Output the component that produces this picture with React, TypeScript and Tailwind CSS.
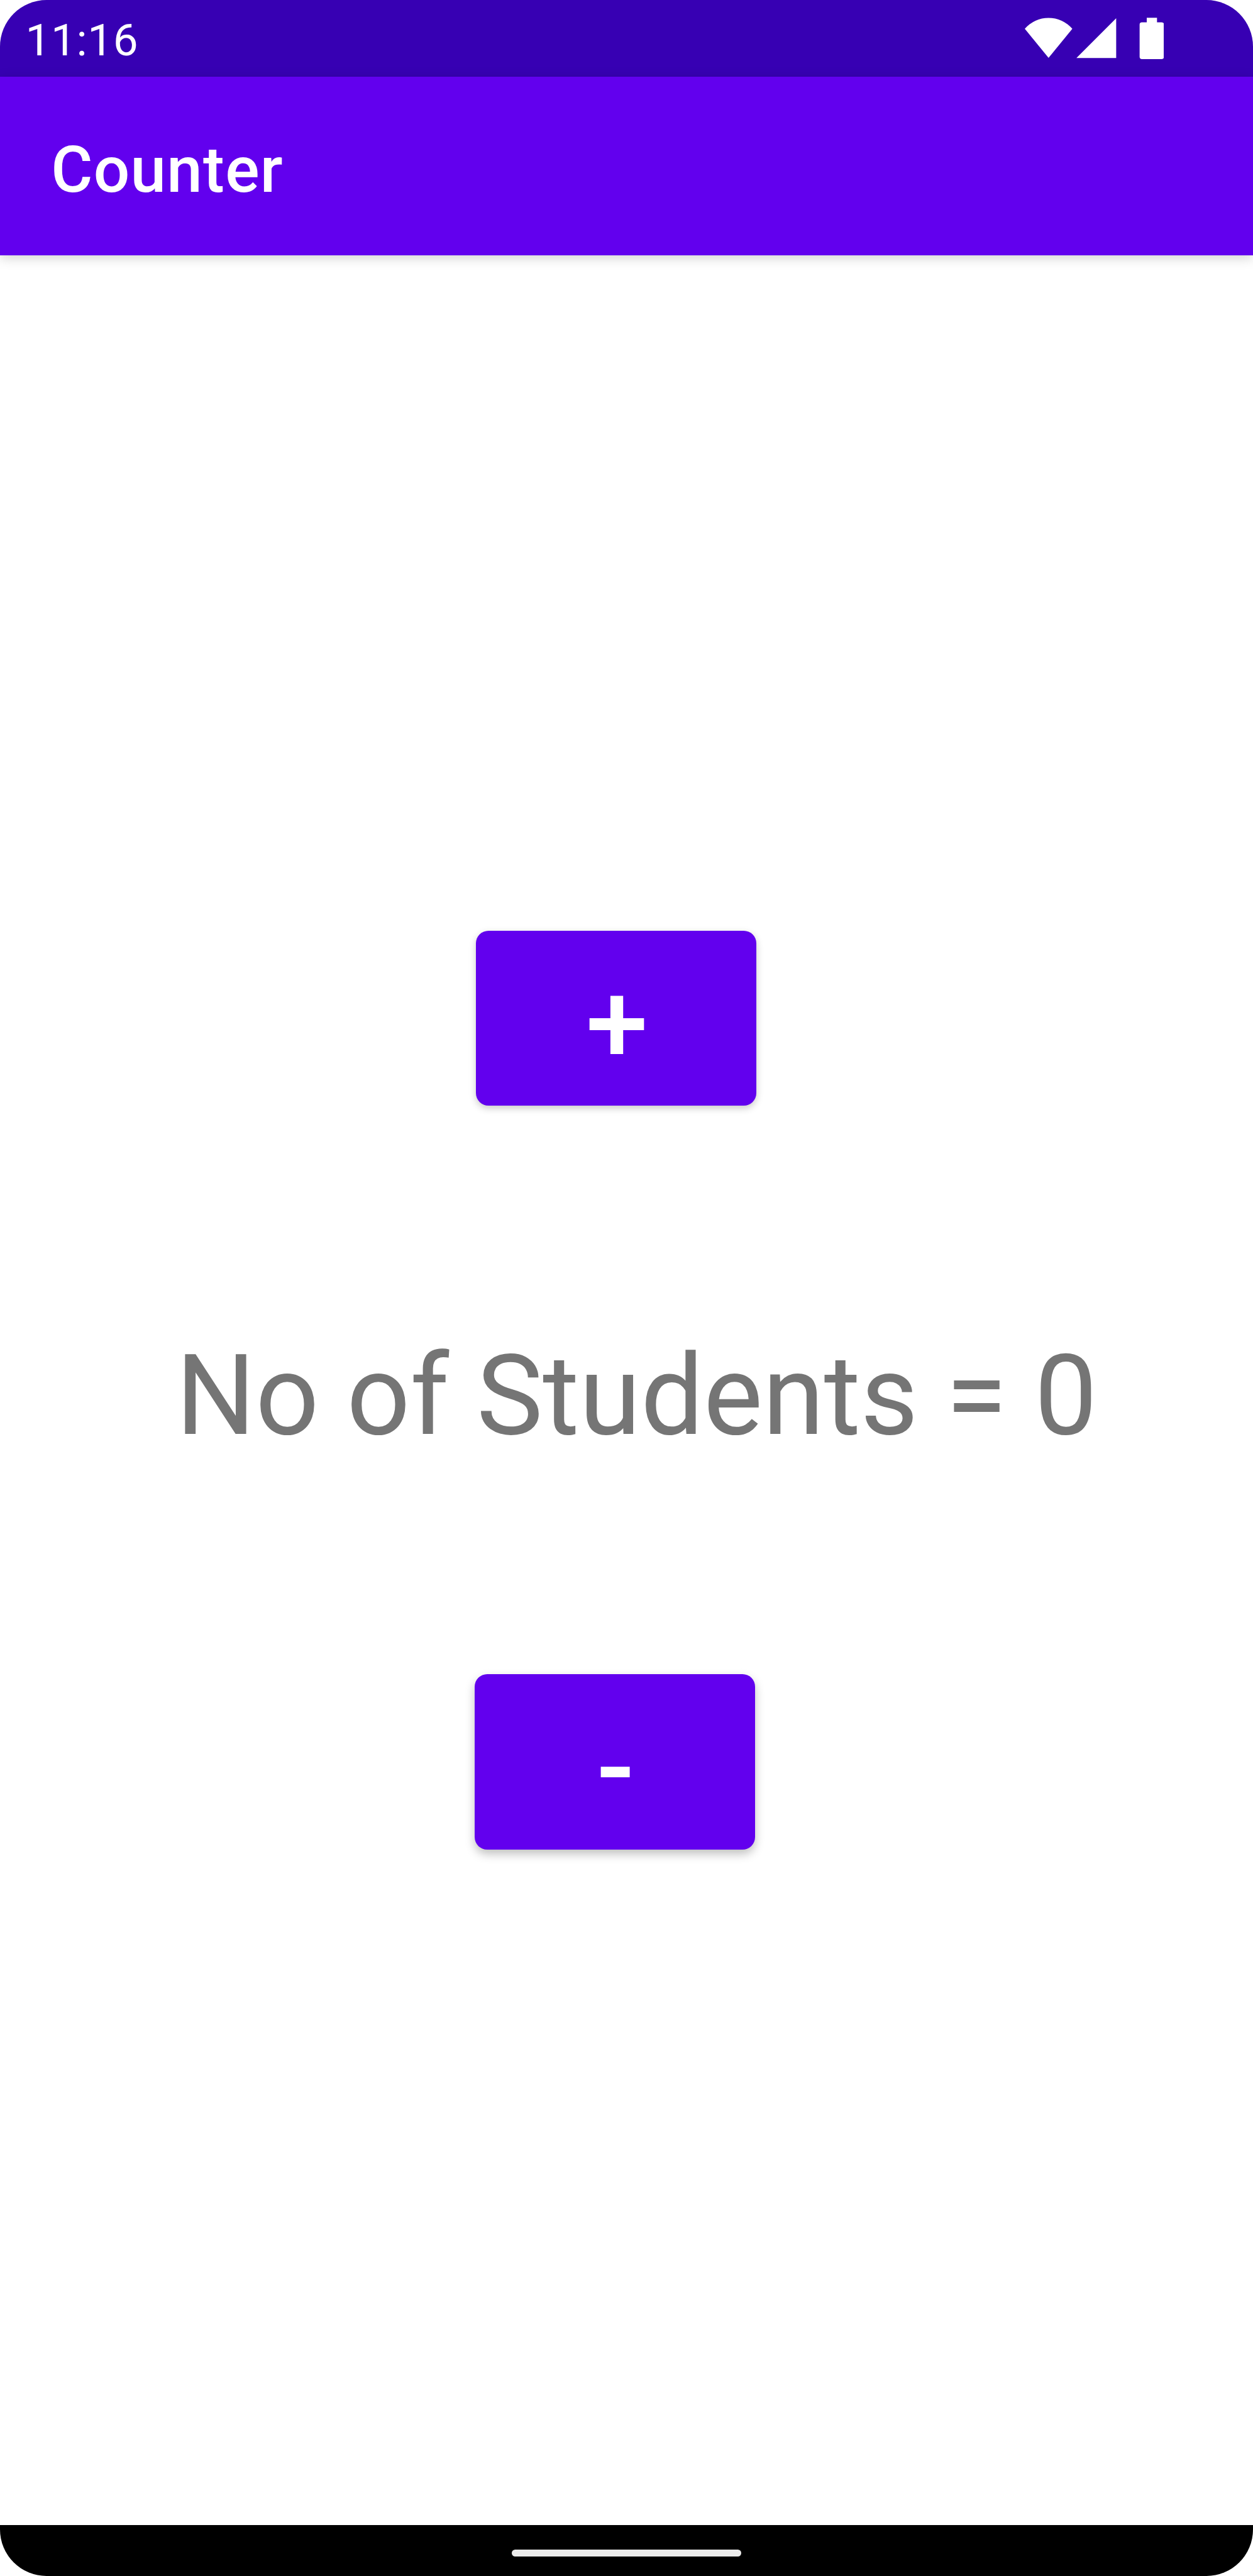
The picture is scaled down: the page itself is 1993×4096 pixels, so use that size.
import { useState } from "react";

function StatusIcons() {
  return (
    <svg className="mt-[27.7px] h-[66.4px] w-[221.4px]" viewBox="1766 30 240 72" preserveAspectRatio="none" fill="white">
      <path d="M1807 99.5 1766 49.3A54.1 54.1 0 0 1 1848 49.3Z" />
      <path d="M1923.6 31V99.6H1855Z" />
      <path d="M1976.3 30.4h17.7V38h8a4 4 0 0 1 4 4v55.5a4 4 0 0 1-4 4h-34a4 4 0 0 1-4-4V42a4 4 0 0 1 4-4h8.3z" />
    </svg>
  );
}

export default function App() {
  const [count, setCount] = useState(0);
  return (
    <div className="h-[4096px] w-[1993px] overflow-hidden bg-white font-[Roboto,sans-serif]">
      <div className="flex h-full w-full flex-col overflow-hidden rounded-[74px] bg-white">
        <header className="flex h-[121.8px] shrink-0 items-start justify-between bg-[#3700b3] pr-[142px] pl-[40.6px]">
          <span className="mt-[28.3px] text-[71px] leading-none tracking-[0.55px] text-white">11:16</span>
          <StatusIcons />
        </header>
        <div className="h-[284.1px] shrink-0 bg-[#6200ee] pt-[98px] pl-[81.2px] shadow-[0_4px_18px_rgba(0,0,0,0.18)]">
          <h1 className="text-[101.5px] leading-none font-medium tracking-[0.0125em] text-white">Counter</h1>
        </div>
        <main className="flex flex-1 flex-col items-start">
          <button
            onClick={() => setCount(count + 1)}
            className="mt-[1073.9px] ml-[756.6px] h-[278.6px] w-[446.5px] shrink-0 rounded-[20px] bg-[#6200ee] pt-[20px] pl-[3px] text-[177.6px] leading-none font-medium text-white shadow-[0_4px_12px_rgba(0,0,0,0.22)]"
          >
            +
          </button>
          <p className="mt-[373px] ml-[279.7px] text-[177.6px] leading-none tracking-[-0.15px] whitespace-nowrap text-[#757575]">
            No of Students = {count}
          </p>
          <button
            onClick={() => setCount(count - 1)}
            className="mt-[353.5px] ml-[754.7px] h-[278.6px] w-[446.5px] shrink-0 rounded-[20px] bg-[#6200ee] pt-[20px] pl-[2px] text-[177.6px] leading-none font-medium text-white shadow-[0_7px_15px_rgba(0,0,0,0.25)]"
          >
            -
          </button>
        </main>
        <footer className="flex h-[81px] shrink-0 justify-center bg-black pt-[39px]">
          <div className="h-[11px] w-[365px] rounded-full bg-[#ebebeb]" />
        </footer>
      </div>
    </div>
  );
}
